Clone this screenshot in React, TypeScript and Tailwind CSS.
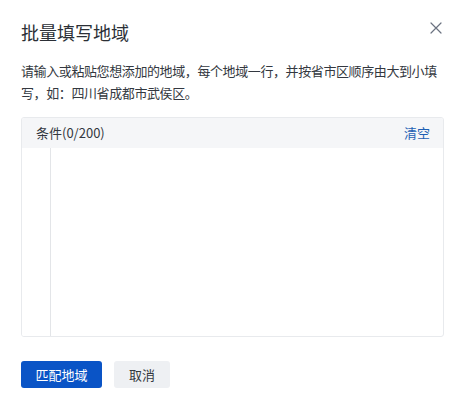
// 批量填写地域 — 对话框

const FONT = { fontFamily: '"Noto Sans CJK SC", "Liberation Sans", sans-serif' };

function CloseIcon() {
  return (
    <svg width="12" height="12" viewBox="0 0 12 12" fill="none" aria-hidden="true">
      <path d="M1 1L11 11M11 1L1 11" stroke="#6b7280" strokeWidth="1.2" strokeLinecap="round" />
    </svg>
  );
}

export default function App() {
  return (
    <div className="w-[461px] h-[405px] bg-white relative" style={FONT}>
      <div className="px-[21px] pt-[19px]">
        <div className="flex items-start justify-between">
          <h2 className="text-[18px] leading-[26px] text-[#2b2f36] font-normal">批量填写地域</h2>
          <button className="mt-[1px] -mr-[4px] p-[2px]">
            <CloseIcon />
          </button>
        </div>

        <p className="mt-[15px] text-[13px] leading-[22px] tracking-[-0.4px] text-[#333840]">
          请输入或粘贴您想添加的地域，每个地域一行，并按省市区顺序由大到小填写，如：四川省成都市武侯区。
        </p>

        <div className="mt-[13px] w-[423px] h-[220px] border border-[#e8eaed] rounded-[3px] flex flex-col overflow-hidden">
          <div className="h-[30px] bg-[#f5f6f8] flex items-center justify-between pl-[14px] pr-[13px] shrink-0">
            <span className="text-[13px] text-[#333840]">条件(0/200)</span>
            <button className="text-[13px] text-[#1e5fb4]">清空</button>
          </div>
          <div className="flex-1 flex">
            <div className="w-[29px] border-r border-[#e3e5e8] bg-white" />
            <textarea className="flex-1 resize-none outline-none p-2 text-[13px]" />
          </div>
        </div>

        <div className="mt-[24px] flex gap-[12px]">
          <button className="w-[81px] h-[27px] rounded-[3px] bg-[#0a54c6] text-white text-[13px]">
            匹配地域
          </button>
          <button className="w-[56px] h-[27px] rounded-[3px] bg-[#eef0f3] text-[#333840] text-[13px]">
            取消
          </button>
        </div>
      </div>
    </div>
  );
}
